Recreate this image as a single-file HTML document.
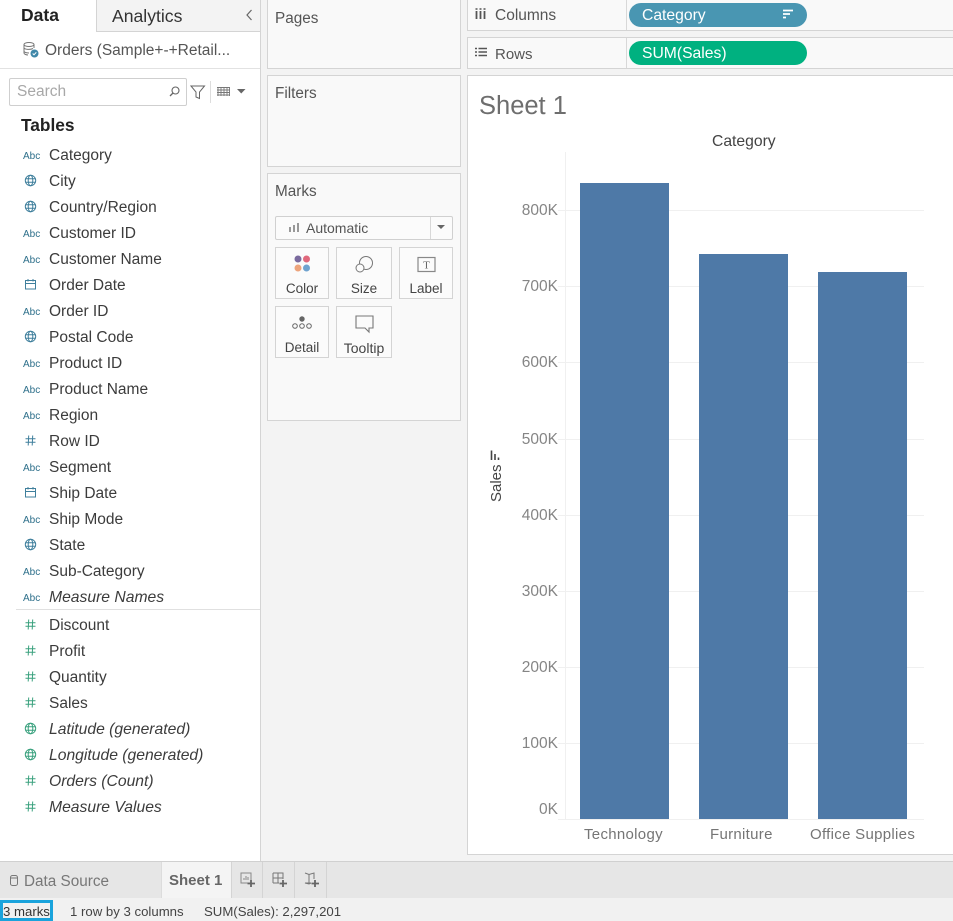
<!DOCTYPE html>
<html><head><meta charset="utf-8"><style>
html,body{margin:0;padding:0}
body{width:953px;height:921px;position:relative;overflow:hidden;background:#f3f3f3;font-family:"Liberation Sans",sans-serif;color:#333}
.a{position:absolute;white-space:nowrap}
.box{position:absolute;box-sizing:border-box;background:#f9f9f9;border:1px solid #d4d4d4}
.f{position:absolute;left:49px;font-size:15.5px;line-height:20px;color:#3c3c3c;white-space:nowrap;margin-top:1px}
.i{font-style:italic;font-size:15.7px}
.abc{position:absolute;left:23px;font-size:10px;line-height:12px;color:#2d6f8a;white-space:nowrap;margin-top:2px}
.card{position:absolute;box-sizing:border-box;background:#fbfbfb;border:1px solid #d4d4d4;font-size:13.500px;color:#444;text-align:center}
.card span{position:absolute;left:0;right:0;bottom:0;line-height:18px}
.y{position:absolute;right:395px;font-size:15.5px;color:#858585;line-height:20px;margin-top:1px}
.g{position:absolute;left:558px;width:366px;height:1px;background:#f0f0f0}
.bar{position:absolute;background:#4e79a7;width:89px}
.x{position:absolute;font-size:15px;color:#757575;line-height:20px;letter-spacing:.3px;white-space:nowrap;margin-top:2px}
.h{position:absolute;font-size:15.3px;color:#555;line-height:20px;white-space:nowrap}
</style></head><body>

<!-- left pane -->
<div class="a" style="left:0;top:0;width:260px;height:861px;background:#fff;border-right:1px solid #d4d4d4"></div>
<div class="a" style="left:96px;top:0;width:163px;height:31px;background:#f3f3f3;border-left:1px solid #d4d4d4;border-bottom:1px solid #d4d4d4"></div>
<div class="a" style="left:21px;top:5px;font-size:17.5px;font-weight:bold;color:#222;line-height:20px">Data</div>
<div class="a" style="left:112px;top:6px;font-size:17.6px;color:#333;line-height:20px">Analytics</div>
<svg class="a" style="left:245px;top:9px" width="9" height="12"><path d="M6.500 1 L2 6 L6.500 11" fill="none" stroke="#666" stroke-width="1.200"/></svg>
<svg class="a" style="left:22px;top:41px" width="18" height="18" viewBox="0 0 18 18"><ellipse cx="7" cy="3.500" rx="5" ry="2" fill="none" stroke="#777"/><path d="M2 3.500V12c0 1 2 2 4 2M12 3.500V7M2 7c1 1.500 6 2 9 .5M2 10.500c1 1 3 1.500 5 1.500" fill="none" stroke="#777"/><circle cx="12.500" cy="12.500" r="4" fill="#3f87a8"/><path d="M10.700 12.500l1.300 1.300 2.300-2.500" fill="none" stroke="#fff"/></svg>
<div class="a" style="left:45px;top:41px;font-size:15.5px;color:#555;line-height:20px">Orders (Sample+-+Retail...</div>
<div class="a" style="left:0;top:68px;width:260px;height:1px;background:#e2e2e2"></div>
<div class="a" style="left:9px;top:78px;width:178px;height:28px;box-sizing:border-box;border:1px solid #cfcfcf;border-radius:2px;background:#fff"></div>
<div class="a" style="left:17px;top:82px;font-size:15.5px;color:#a8a8a8;line-height:20px">Search</div>
<svg class="a" style="left:168px;top:85px" width="13" height="13"><circle cx="7.500" cy="5.500" r="3.500" fill="none" stroke="#666" stroke-width="1.100"/><path d="M5 8 L2 11" stroke="#666" stroke-width="1.300"/></svg>
<svg class="a" style="left:190px;top:84px" width="16" height="16"><path d="M1 2H14.500L9.500 8V14.500L6 13V8Z" fill="none" stroke="#666"/></svg>
<div class="a" style="left:210px;top:81px;width:1px;height:22px;background:#ddd"></div>
<svg class="a" style="left:217px;top:87px" width="13" height="10"><path d="M0 .5H13M0 3H13M0 5.500H13M0 8H13M1 0V9M4 0V9M7 0V9M10 0V9M12.500 0V9" stroke="#777" stroke-width=".9" fill="none"/></svg>
<svg class="a" style="left:237px;top:89px" width="9" height="6"><path d="M0 0H8.500L4.250 4.500Z" fill="#666"/></svg>
<div class="a" style="left:21px;top:115px;font-size:17.3px;font-weight:bold;color:#222;line-height:20px">Tables</div>

<svg width="0" height="0" style="position:absolute"><defs>
<g id="globe" fill="none"><circle cx="6.500" cy="6.500" r="5.200"/><ellipse cx="6.500" cy="6.500" rx="2.300" ry="5.200"/><path d="M1.300 4.700H11.700M1.300 8.300H11.700"/></g>
<g id="cal" fill="none"><rect x="1.500" y="2.500" width="10" height="8.500"/><path d="M1.500 5.500H11.500M4 1V3.500M9 1V3.500"/></g>
<g id="hash" fill="none"><path d="M4.700 1.500L4.200 11.500M8.700 1.500L8.200 11.500M1.500 4.800H11.500M1.500 8.300H11.500"/></g>
</defs></svg>

<div class="abc" style="top:149px">Abc</div><div class="f" style="top:145px">Category</div>
<svg class="a" style="left:24px;top:174px;stroke:#3f7f9c" width="13" height="13"><use href="#globe"/></svg><div class="f" style="top:171px">City</div>
<svg class="a" style="left:24px;top:200px;stroke:#3f7f9c" width="13" height="13"><use href="#globe"/></svg><div class="f" style="top:197px">Country/Region</div>
<div class="abc" style="top:227px">Abc</div><div class="f" style="top:223px">Customer ID</div>
<div class="abc" style="top:253px">Abc</div><div class="f" style="top:249px">Customer Name</div>
<svg class="a" style="left:24px;top:278px;stroke:#3f7f9c" width="13" height="13"><use href="#cal"/></svg><div class="f" style="top:275px">Order Date</div>
<div class="abc" style="top:305px">Abc</div><div class="f" style="top:301px">Order ID</div>
<svg class="a" style="left:24px;top:330px;stroke:#3f7f9c" width="13" height="13"><use href="#globe"/></svg><div class="f" style="top:327px">Postal Code</div>
<div class="abc" style="top:357px">Abc</div><div class="f" style="top:353px">Product ID</div>
<div class="abc" style="top:383px">Abc</div><div class="f" style="top:379px">Product Name</div>
<div class="abc" style="top:409px">Abc</div><div class="f" style="top:405px">Region</div>
<svg class="a" style="left:24px;top:434px;stroke:#3f7f9c" width="13" height="13"><use href="#hash"/></svg><div class="f" style="top:431px">Row ID</div>
<div class="abc" style="top:461px">Abc</div><div class="f" style="top:457px">Segment</div>
<svg class="a" style="left:24px;top:486px;stroke:#3f7f9c" width="13" height="13"><use href="#cal"/></svg><div class="f" style="top:483px">Ship Date</div>
<div class="abc" style="top:513px">Abc</div><div class="f" style="top:509px">Ship Mode</div>
<svg class="a" style="left:24px;top:538px;stroke:#3f7f9c" width="13" height="13"><use href="#globe"/></svg><div class="f" style="top:535px">State</div>
<div class="abc" style="top:565px">Abc</div><div class="f" style="top:561px">Sub-Category</div>
<div class="abc" style="top:591px">Abc</div><div class="f i" style="top:587px">Measure Names</div>
<div class="a" style="left:16px;top:609px;width:244px;height:1px;background:#e0e0e0"></div>
<svg class="a" style="left:24px;top:618px;stroke:#3aa17e" width="13" height="13"><use href="#hash"/></svg><div class="f" style="top:615px">Discount</div>
<svg class="a" style="left:24px;top:644px;stroke:#3aa17e" width="13" height="13"><use href="#hash"/></svg><div class="f" style="top:641px">Profit</div>
<svg class="a" style="left:24px;top:670px;stroke:#3aa17e" width="13" height="13"><use href="#hash"/></svg><div class="f" style="top:667px">Quantity</div>
<svg class="a" style="left:24px;top:696px;stroke:#3aa17e" width="13" height="13"><use href="#hash"/></svg><div class="f" style="top:693px">Sales</div>
<svg class="a" style="left:24px;top:722px;stroke:#3aa17e" width="13" height="13"><use href="#globe"/></svg><div class="f i" style="top:719px">Latitude (generated)</div>
<svg class="a" style="left:24px;top:748px;stroke:#3aa17e" width="13" height="13"><use href="#globe"/></svg><div class="f i" style="top:745px">Longitude (generated)</div>
<svg class="a" style="left:24px;top:774px;stroke:#3aa17e" width="13" height="13"><use href="#hash"/></svg><div class="f i" style="top:771px">Orders (Count)</div>
<svg class="a" style="left:24px;top:800px;stroke:#3aa17e" width="13" height="13"><use href="#hash"/></svg><div class="f i" style="top:797px">Measure Values</div>

<!-- middle -->
<div class="box" style="left:267px;top:-1px;width:194px;height:70px"></div>
<div class="h" style="left:275px;top:9px">Pages</div>
<div class="box" style="left:267px;top:75px;width:194px;height:92px"></div>
<div class="h" style="left:275px;top:84px">Filters</div>
<div class="box" style="left:267px;top:173px;width:194px;height:248px"></div>
<div class="h" style="left:275px;top:182px">Marks</div>
<div class="a" style="left:275px;top:216px;width:178px;height:24px;box-sizing:border-box;border:1px solid #d0d0d0;border-radius:2px;background:#fbfbfb"></div>
<div class="a" style="left:430px;top:217px;width:1px;height:22px;background:#d8d8d8"></div>
<svg class="a" style="left:288px;top:223px" width="12" height="10"><path d="M1 4H3V9H1ZM5 2H7V9H5ZM9 0H11V9H9Z" fill="#999"/></svg>
<div class="a" style="left:306px;top:220px;font-size:14px;color:#555;line-height:17px">Automatic</div>
<svg class="a" style="left:437px;top:225px" width="9" height="6"><path d="M0 0H8L4 4Z" fill="#666"/></svg>

<div class="card" style="left:275px;top:247px;width:54px;height:52px"><svg style="position:absolute;left:17px;top:6px" width="20" height="20"><circle cx="5" cy="5" r="3.500" fill="#7a6a9e"/><circle cx="13.500" cy="5" r="3.500" fill="#e0687c"/><circle cx="5" cy="14" r="3.500" fill="#eda47c"/><circle cx="13.500" cy="14" r="3.500" fill="#6fa3cf"/></svg><span>Color</span></div>
<div class="card" style="left:336px;top:247px;width:56px;height:52px"><svg style="position:absolute;left:17px;top:6px" width="22" height="22"><circle cx="12" cy="9" r="6.500" fill="none" stroke="#777" stroke-width="1"/><circle cx="6" cy="14" r="4" fill="#fbfbfb" stroke="#777" stroke-width="1"/></svg><span>Size</span></div>
<div class="card" style="left:399px;top:247px;width:54px;height:52px"><svg style="position:absolute;left:17px;top:8px" width="20" height="18"><rect x="1" y="1.500" width="17" height="14" fill="none" stroke="#888" stroke-width="1.200"/><text x="9.500" y="12.500" text-anchor="middle" font-family="Liberation Serif" font-size="11" fill="#666">T</text></svg><span>Label</span></div>
<div class="card" style="left:275px;top:306px;width:54px;height:52px"><svg style="position:absolute;left:14px;top:8px" width="24" height="18"><circle cx="12" cy="4" r="2.700" fill="#666"/><circle cx="5" cy="11" r="2.300" fill="none" stroke="#666"/><circle cx="12" cy="11" r="2.300" fill="none" stroke="#666"/><circle cx="19" cy="11" r="2.300" fill="none" stroke="#666"/></svg><span>Detail</span></div>
<div class="card" style="left:336px;top:306px;width:56px;height:52px"><svg style="position:absolute;left:18px;top:8px" width="20" height="20"><path d="M1 1H18V13H14V17L10 13H1Z" fill="none" stroke="#777" stroke-width="1.100"/></svg><span style="font-size:14px">Tooltip</span></div>

<!-- shelves -->
<div class="box" style="left:467px;top:-1px;width:490px;height:32px"></div>
<div class="a" style="left:626px;top:0;width:1px;height:30px;background:#d8d8d8"></div>
<svg class="a" style="left:475px;top:8px" width="12" height="12"><path d="M1.500 3V11M5.500 3V11M9.500 3V11" stroke="#555" stroke-width="1.800"/><path d="M.5 1H2.500M4.500 1H6.500M8.500 1H10.500" stroke="#555" stroke-width="1.500"/></svg>
<div class="a" style="left:495px;top:6px;font-size:15.5px;color:#555;line-height:20px">Columns</div>
<div class="a" style="left:629px;top:3px;width:178px;height:24px;border-radius:12px;background:#4996b2"></div>
<div class="a" style="left:642px;top:6px;font-size:15.7px;color:#fff;line-height:20px">Category</div>
<svg class="a" style="left:782px;top:9px" width="12" height="12"><path d="M1 1.500H11M1 5H8M1 8.500H4" stroke="#fff" stroke-width="1.700"/></svg>

<div class="box" style="left:467px;top:37px;width:490px;height:32px"></div>
<div class="a" style="left:626px;top:38px;width:1px;height:30px;background:#d8d8d8"></div>
<svg class="a" style="left:475px;top:47px" width="12" height="11"><path d="M0 1.500H2M0 5H2M0 8.500H2M3.500 1.500H12M3.500 5H12M3.500 8.500H12" stroke="#555" stroke-width="1.400"/></svg>
<div class="a" style="left:495px;top:45px;font-size:15px;color:#555;line-height:20px">Rows</div>
<div class="a" style="left:629px;top:41px;width:178px;height:24px;border-radius:12px;background:#00b180"></div>
<div class="a" style="left:642px;top:44px;font-size:15.7px;color:#fff;line-height:20px">SUM(Sales)</div>

<!-- view -->
<div class="box" style="left:467px;top:75px;width:490px;height:780px;background:#fff"></div>
<div class="a" style="left:479px;top:90px;font-size:25.5px;color:#6e6e6e;line-height:32px;font-weight:normal">Sheet 1</div>
<div class="a" style="left:712px;top:132px;font-size:15.7px;color:#444;line-height:20px">Category</div>
<div class="a" style="left:565px;top:152px;width:1px;height:668px;background:#f0f0f0"></div>

<div class="g" style="top:210px"></div><div class="g" style="top:286px"></div><div class="g" style="top:362px"></div><div class="g" style="top:439px"></div><div class="g" style="top:515px"></div><div class="g" style="top:591px"></div><div class="g" style="top:667px"></div><div class="g" style="top:743px"></div><div class="g" style="top:819px"></div>

<div class="y" style="top:200px">800K</div><div class="y" style="top:276px">700K</div><div class="y" style="top:352px">600K</div><div class="y" style="top:429px">500K</div><div class="y" style="top:505px">400K</div><div class="y" style="top:581px">300K</div><div class="y" style="top:657px">200K</div><div class="y" style="top:733px">100K</div><div class="y" style="top:799px">0K</div>

<div class="bar" style="left:580px;top:183px;height:636px"></div>
<div class="bar" style="left:699px;top:254px;height:565px"></div>
<div class="bar" style="left:818px;top:272px;height:547px"></div>

<div class="x" style="left:584px;top:823px">Technology</div>
<div class="x" style="left:710px;top:823px">Furniture</div>
<div class="x" style="left:810px;top:823px">Office Supplies</div>

<div class="a" style="left:488px;top:502px;font-size:15px;color:#444;line-height:18px;transform-origin:0 0;transform:rotate(-90deg)">Sales</div>
<svg class="a" style="left:490px;top:450px" width="12" height="11"><path d="M1.500 .5V10M5 4V10M8.500 7.500V10" stroke="#444" stroke-width="1.600"/></svg>

<!-- tabs -->
<div class="a" style="left:0;top:861px;width:953px;height:1px;background:#d0d0d0"></div>
<div class="a" style="left:0;top:862px;width:953px;height:36px;background:#e6e6e6"></div>
<svg class="a" style="left:9px;top:874px" width="10" height="13"><rect x="1.500" y="1.500" width="7" height="10" rx="2" fill="none" stroke="#777"/><path d="M1.500 4H8.500" stroke="#777"/></svg>
<div class="a" style="left:24px;top:872px;font-size:15.3px;color:#777;line-height:20px">Data Source</div>
<div class="a" style="left:161px;top:862px;width:69px;height:36px;background:#f4f4f4;border-left:1px solid #dcdcdc;border-right:1px solid #d4d4d4"></div>
<div class="a" style="left:169px;top:871px;font-size:15px;font-weight:bold;color:#666;line-height:20px">Sheet 1</div>
<div class="a" style="left:262px;top:862px;width:1px;height:36px;background:#d4d4d4"></div>
<div class="a" style="left:294px;top:862px;width:1px;height:36px;background:#d4d4d4"></div>
<div class="a" style="left:326px;top:862px;width:1px;height:36px;background:#d4d4d4"></div>
<svg class="a" style="left:240px;top:872px" width="16" height="16"><rect x="1" y="1" width="10" height="10" fill="none" stroke="#888"/><path d="M4 8V6M6 8V4M8 8V5" stroke="#888"/><path d="M11 8V15M7.500 11.500H15" stroke="#666" stroke-width="1.800"/></svg>
<svg class="a" style="left:272px;top:872px" width="16" height="16"><path d="M1 1H11V7M7 11H1ZM1 1V11M1 6H11M6 1V11" fill="none" stroke="#777"/><path d="M11 8V15M7.500 11.500H15" stroke="#666" stroke-width="1.800"/></svg>
<svg class="a" style="left:304px;top:872px" width="16" height="16"><path d="M1 1L5 2.500L10 1V7M7 11L5 12L1 11ZM5 2.500V12" fill="none" stroke="#777"/><path d="M11 8V15M7.500 11.500H15" stroke="#666" stroke-width="1.800"/></svg>

<!-- status -->
<div class="a" style="left:0;top:898px;width:953px;height:23px;background:#f1f1f1"></div>
<div class="a" style="left:0;top:900px;width:53px;height:21px;box-sizing:border-box;border:3px solid #1aa3dc"></div>
<div class="a" style="left:3px;top:903px;font-size:13.2px;color:#333;line-height:17px">3 marks</div>
<div class="a" style="left:70px;top:903px;font-size:13.200px;color:#444;line-height:17px">1 row by 3 columns</div>
<div class="a" style="left:204px;top:903px;font-size:13.200px;color:#444;line-height:17px">SUM(Sales): 2,297,201</div>
</body></html>
